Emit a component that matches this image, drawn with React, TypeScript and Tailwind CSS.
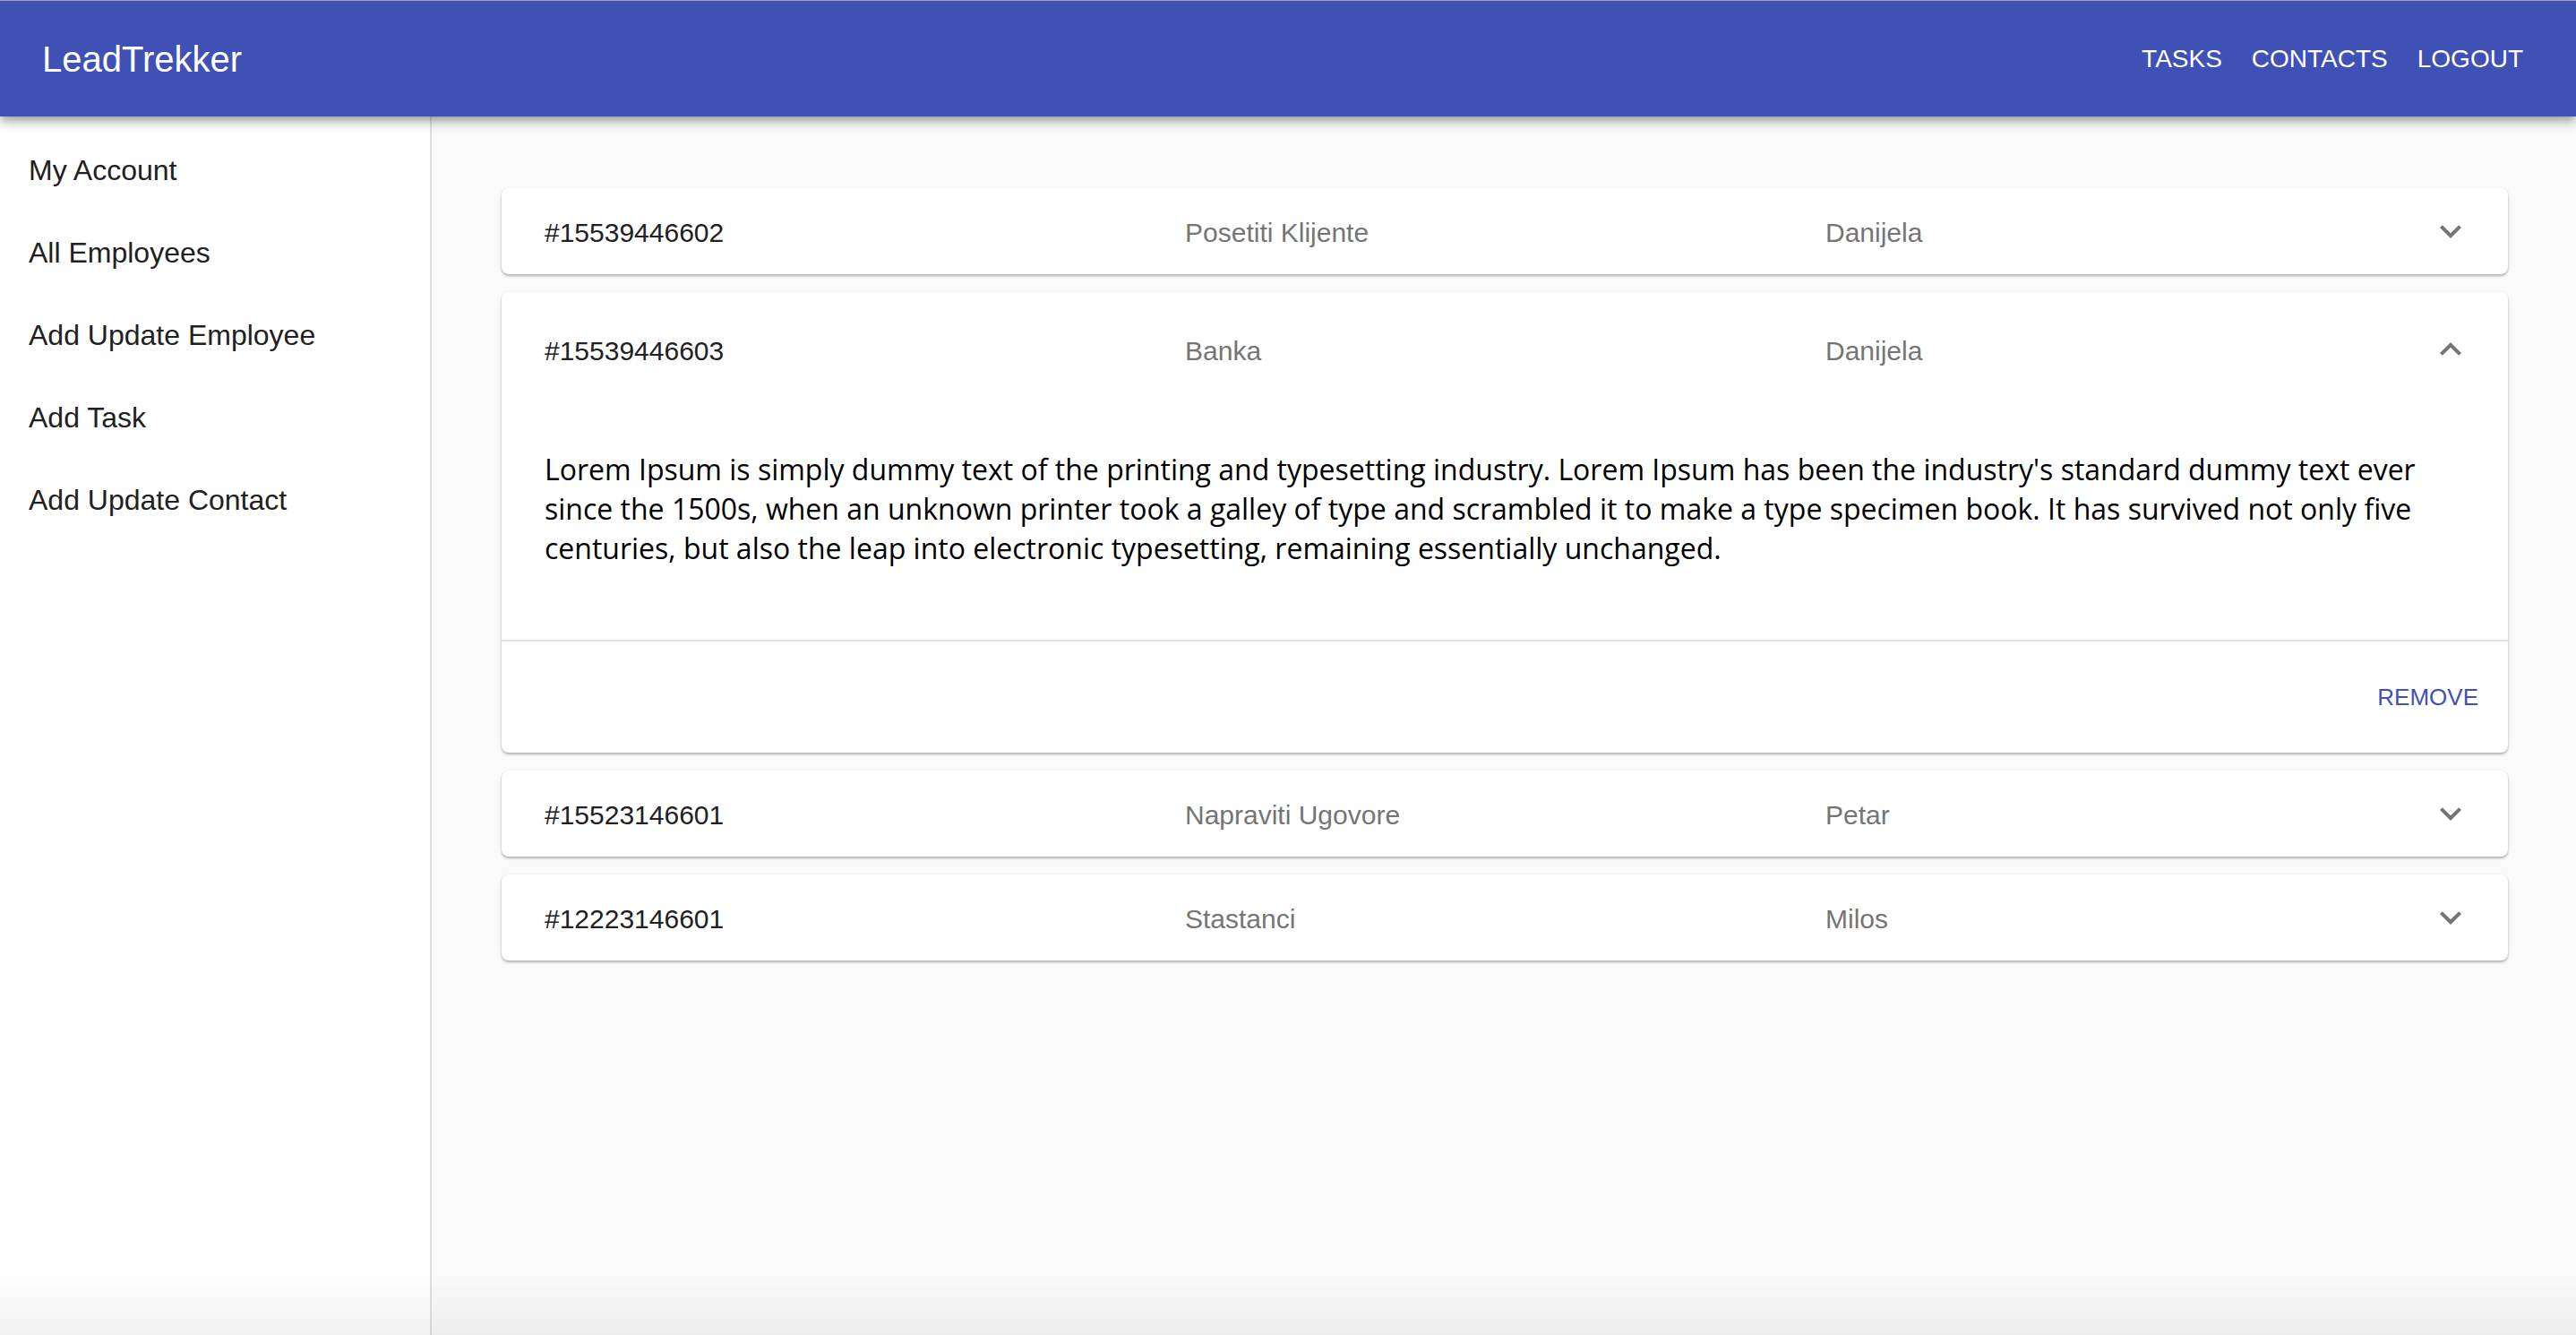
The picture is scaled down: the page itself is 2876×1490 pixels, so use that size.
import React from "react";

const ExpandMore = () => (
  <svg width="48" height="48" viewBox="0 0 24 24" fill="#757575">
    <path d="M16.59 8.59L12 13.17 7.41 8.59 6 10l6 6 6-6z" />
  </svg>
);

const ExpandLess = () => (
  <svg width="48" height="48" viewBox="0 0 24 24" fill="#757575">
    <path d="M12 8l-6 6 1.41 1.41L12 10.83l4.59 4.58L18 14z" />
  </svg>
);

type Task = { id: string; title: string; who: string; open?: boolean };

const tasks: Task[] = [
  { id: "#15539446602", title: "Posetiti Klijente", who: "Danijela" },
  { id: "#15539446603", title: "Banka", who: "Danijela", open: true },
  { id: "#15523146601", title: "Napraviti Ugovore", who: "Petar" },
  { id: "#12223146601", title: "Stastanci", who: "Milos" },
];

const sideItems = ["My Account", "All Employees", "Add Update Employee", "Add Task", "Add Update Contact"];

function Card({ t }: { t: Task }) {
  return (
    <div className="bg-white rounded-[8px] shadow-[0_2px_3px_rgba(0,0,0,0.28),0_0_3px_rgba(0,0,0,0.06)]">
      <div className={`flex items-center pl-[48px] pr-[40px] ${t.open ? "h-[128px]" : "h-[96px]"}`}>
        <div className="flex-1 grid grid-cols-[715px_715px_1fr] text-[30px] leading-[36px] pt-[3px]">
          <div className="text-[#212121]">{t.id}</div>
          <div className="text-[#757575]">{t.title}</div>
          <div className="text-[#757575]">{t.who}</div>
        </div>
        <div className="w-[48px] h-[48px] flex items-center justify-center">
          {t.open ? <ExpandLess /> : <ExpandMore />}
        </div>
      </div>
      {t.open && (
        <>
          <div className="pt-[48px] pb-[80px] px-[48px]">
            <p className="font-['Open_Sans',sans-serif] text-[32px] leading-[44px] text-black">
              Lorem Ipsum is simply dummy text of the printing and typesetting industry. Lorem Ipsum has been the
              industry's standard dummy text ever since the 1500s, when an unknown printer took a galley of type and
              scrambled it to make a type specimen book. It has survived not only five centuries, but also the leap
              into electronic typesetting, remaining essentially unchanged.
            </p>
          </div>
          <div className="h-[2px] bg-[#e0e0e0]" />
          <div className="h-[124px] flex items-center justify-end pr-[17px]">
            <button className="px-[16px] text-[26px] leading-[32px] text-[#3f51b5] uppercase">Remove</button>
          </div>
        </>
      )}
    </div>
  );
}

export default function App() {
  return (
    <div className="min-h-screen flex flex-col bg-[#fafafa] font-['Liberation_Sans',Arial,sans-serif]">
      <header className="relative z-10 h-[130px] shrink-0 border-t border-[#a6a6a6] bg-[#3f51b5] flex items-center justify-between pl-[47px] pr-[43px] shadow-[0_4px_8px_-2px_rgba(0,0,0,0.25),0_8px_10px_0_rgba(0,0,0,0.14),0_2px_20px_0_rgba(0,0,0,0.12)]">
        <div className="text-white text-[40px] leading-[48px]">LeadTrekker</div>
        <nav className="flex items-center gap-[1px]">
          {["Tasks", "Contacts", "Logout"].map((n) => (
            <button key={n} className="px-[16px] text-white text-[28px] leading-[36px] uppercase">
              {n}
            </button>
          ))}
        </nav>
      </header>
      <div className="flex flex-1">
        <aside className="w-[482px] shrink-0 bg-white border-r-2 border-[#e0e0e0] pt-[14px]">
          {sideItems.map((s) => (
            <div key={s} className="h-[92px] flex items-center pl-[32px] text-[32px] text-[#212121]">
              {s}
            </div>
          ))}
        </aside>
        <main className="flex-1 pt-[80px] pl-[78px] pr-[76px]">
          <div className="flex flex-col gap-[20px]">
            {tasks.map((t) => (
              <Card key={t.id} t={t} />
            ))}
          </div>
        </main>
      </div>
      <div className="fixed bottom-0 inset-x-0 h-[70px] pointer-events-none bg-linear-to-b from-transparent to-black/5" />
    </div>
  );
}
